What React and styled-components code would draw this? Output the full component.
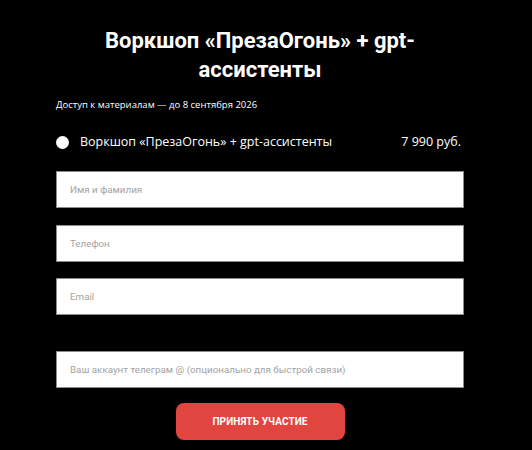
import React from "react";
import styled, { createGlobalStyle } from "styled-components";

const Global = createGlobalStyle`
  html, body { margin: 0; padding: 0; background: #000; }
  body { font-family: "Open Sans", sans-serif; color: #fff; }
  * { box-sizing: border-box; }
`;

const Page = styled.div`
  width: 532px;
  min-height: 450px;
  background: #000;
  padding: 26px 0 0 56px;
`;

const Form = styled.form`
  width: 408px;
  display: flex;
  flex-direction: column;
`;

const Title = styled.h1`
  margin: 0;
  font-family: Roboto, sans-serif;
  font-weight: 700;
  font-size: 22px;
  line-height: 29px;
  text-align: center;
  color: #fff;
`;

const Note = styled.div`
  margin-top: 14px;
  font-family: "Open Sans", sans-serif;
  font-size: 9.5px;
  line-height: 14px;
  color: #fff;
`;

const OptionRow = styled.label`
  margin-top: 21px;
  display: flex;
  align-items: center;
  font-family: "Open Sans", sans-serif;
  font-size: 12.5px;
  line-height: 18px;
  color: #fff;
`;

const Radio = styled.span`
  width: 13px;
  height: 13px;
  border-radius: 50%;
  background: #fff;
  flex: none;
  margin-right: 11px;
`;

const OptionName = styled.span`
  flex: 1;
`;

const Price = styled.span`
  margin-right: 3px;
`;

const Field = styled.input`
  display: block;
  width: 408px;
  height: 37px;
  margin-top: ${(p) => p.$gap}px;
  border: 1px solid #8a8a8a;
  background: #fff;
  padding: 0 13px;
  font-family: Roboto, sans-serif;
  font-size: 9.8px;
  color: #333;
  outline: none;
  &::placeholder { color: #a3a3a3; }
`;

const Submit = styled.button`
  align-self: center;
  margin-top: 15px;
  width: 169px;
  height: 37px;
  border: none;
  border-radius: 8px;
  background: #e0453f;
  color: #fff;
  font-family: Roboto, sans-serif;
  font-weight: 700;
  font-size: 10px;
  letter-spacing: 0.1px;
  text-transform: uppercase;
  cursor: pointer;
`;

export default function App() {
  return (
    <Page>
      <Global />
      <Form onSubmit={(e) => e.preventDefault()}>
        <Title>Воркшоп «ПрезаОгонь» + gpt-ассистенты</Title>
        <Note>Доступ к материалам — до 8 сентября 2026</Note>
        <OptionRow>
          <Radio />
          <OptionName>Воркшоп «ПрезаОгонь» + gpt-ассистенты</OptionName>
          <Price>7 990 руб.</Price>
        </OptionRow>
        <Field $gap={20} placeholder="Имя и фамилия" />
        <Field $gap={17} placeholder="Телефон" />
        <Field $gap={16} placeholder="Email" />
        <Field $gap={36} placeholder="Ваш аккаунт телеграм @ (опционально для быстрой связи)" />
        <Submit type="submit">Принять участие</Submit>
      </Form>
    </Page>
  );
}
